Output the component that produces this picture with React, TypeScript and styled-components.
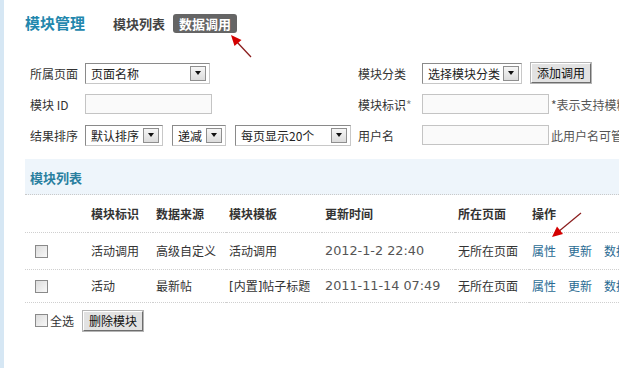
import React from 'react';
import styled, { createGlobalStyle } from 'styled-components';

const GlobalStyle = createGlobalStyle`
  html, body {
    margin: 0;
    padding: 0;
    background: #fff;
    overflow: hidden;
  }
  body {
    font-family: "DejaVu Sans", "Noto Sans CJK SC", sans-serif;
    font-size: 12px;
    color: #333;
  }
`;

const Page = styled.div`
  position: relative;
  width: 619px;
  height: 368px;
  box-sizing: border-box;
  border-left: 4px solid #d6e7f4;
  padding-left: 21px;
  overflow: hidden;
`;

const Header = styled.div`
  display: flex;
  align-items: center;
  padding-top: 13px;
  height: 20px;
`;

const Title = styled.h2`
  margin: 0 22px 0 0;
  font-size: 15px;
  line-height: 20px;
  font-weight: bold;
  color: #2287ad;
  font-family: "Noto Sans CJK SC", sans-serif;
`;

const Tab = styled.span<{ active?: boolean }>`
  display: inline-block;
  font-family: "Noto Sans CJK SC", sans-serif;
  font-size: 13px;
  font-weight: bold;
  line-height: 19px;
  height: 19px;
  padding: 0 6px;
  margin-right: 2px;
  border-radius: 3px;
  color: ${(p) => (p.active ? '#fff' : '#444')};
  background: ${(p) => (p.active ? '#656565' : 'transparent')};
`;

const Form = styled.div`
  display: grid;
  grid-template-columns: 55px 273px 64px 1fr;
  grid-auto-rows: 22px;
  row-gap: 9px;
  margin-top: 29px;
  padding-left: 5px;
  align-items: center;
`;

const Label = styled.span`
  font-family: "Noto Sans CJK SC", sans-serif;
  color: #333;
  white-space: nowrap;
`;

const Star = styled.span`
  color: #888;
`;

const Controls = styled.div`
  display: flex;
  align-items: center;
  gap: 9px;
  white-space: nowrap;
`;

const SelectBox = styled.div<{ w: number }>`
  display: flex;
  align-items: center;
  justify-content: space-between;
  box-sizing: border-box;
  width: ${(p) => p.w}px;
  height: 21px;
  padding: 0 3px 0 5px;
  border: 1px solid #8a8a8a;
  border-right-color: #c8c8c8;
  border-bottom-color: #c8c8c8;
  background: #fff;
  font-family: "Noto Sans CJK SC", sans-serif;
  color: #222;
  white-space: nowrap;
  overflow: hidden;
`;

const ArrowBox = styled.span`
  display: flex;
  align-items: center;
  justify-content: center;
  flex: none;
  width: 14px;
  height: 13px;
  margin-left: 3px;
  border: 1px solid #8f8f8f;
  background: linear-gradient(#f6f6f6, #dcdcdc);
  &::after {
    content: '';
    border-left: 3px solid transparent;
    border-right: 3px solid transparent;
    border-top: 4px solid #111;
  }
`;

const TextInput = styled.div`
  box-sizing: border-box;
  width: 127px;
  height: 20px;
  border: 1px solid #c4c4c4;
  background: #fafafa;
`;

const Note = styled.span`
  margin-left: -7px;
  color: #555;
  font-family: "Noto Sans CJK SC", sans-serif;
`;

const Button = styled.button`
  box-sizing: border-box;
  height: 20px;
  padding: 0 5px;
  font-family: "Noto Sans CJK SC", sans-serif;
  font-size: 12px;
  line-height: 16px;
  color: #111;
  background: #e2e2e2;
  border: 1px solid;
  border-color: #fff #6d6d6d #6d6d6d #fff;
  outline: 1px solid #b5b5b5;
`;

const Section = styled.div`
  margin-top: 13px;
`;

const SectionHead = styled.div`
  height: 34px;
  padding-left: 5px;
  background: #eef5fb;
  border-bottom: 1px dotted #c9c9c9;
  display: flex;
  align-items: center;
  font-family: "Noto Sans CJK SC", sans-serif;
  font-size: 13px;
  font-weight: bold;
  color: #2a7f9f;
  padding-top: 1px;
`;

const Table = styled.table`
  border-collapse: collapse;
  table-layout: fixed;
  width: 620px;
`;

const Row = styled.tr<{ h: number }>`
  height: ${(p) => p.h}px;
  border-bottom: 1px dotted #cfcfcf;
`;

const Th = styled.th<{ w?: number }>`
  box-sizing: border-box;
  width: ${(p) => (p.w ? `${p.w}px` : 'auto')};
  text-align: left;
  padding: 0 0 0 3px;
  font-family: "Noto Sans CJK SC", sans-serif;
  font-weight: bold;
  font-size: 12px;
  color: #333;
  white-space: nowrap;
`;

const Td = styled.td<{ muted?: boolean }>`
  box-sizing: border-box;
  padding: 0 0 0 3px;
  white-space: nowrap;
  overflow: hidden;
  color: ${(p) => (p.muted ? '#555' : '#333')};
  font-size: ${(p) => (p.muted ? '12.8px' : '12px')};
`;

const CheckCell = styled.td`
  box-sizing: border-box;
  padding-left: 10px;
`;

const Check = styled.span`
  display: inline-block;
  box-sizing: border-box;
  width: 13px;
  height: 13px;
  border: 1px solid #8a8a8a;
  background: linear-gradient(135deg, #dcdcdc, #f8f8f8);
  vertical-align: middle;
`;

const Link = styled.a`
  color: #2a6b93;
  text-decoration: none;
  margin-right: 12px;
`;

const Footer = styled.div`
  display: flex;
  align-items: center;
  gap: 9px;
  padding: 8px 0 0 10px;
  font-family: "Noto Sans CJK SC", sans-serif;
`;

const CheckLabel = styled.label`
  display: flex;
  align-items: center;
  gap: 2px;
  color: #333;
`;

const Overlay = styled.svg`
  position: absolute;
  left: 0;
  top: 0;
  pointer-events: none;
`;

type Module = {
  id: string;
  source: string;
  template: string;
  updated: string;
  page: string;
};

const modules: Module[] = [
  { id: '活动调用', source: '高级自定义', template: '活动调用', updated: '2012-1-2 22:40', page: '无所在页面' },
  { id: '活动', source: '最新帖', template: '[内置]帖子标题', updated: '2011-11-14 07:49', page: '无所在页面' },
];

const Select: React.FC<{ w: number; children: React.ReactNode }> = ({ w, children }) => (
  <SelectBox w={w}>
    <span>{children}</span>
    <ArrowBox />
  </SelectBox>
);

export default function App() {
  return (
    <>
      <GlobalStyle />
      <Page>
        <Header>
          <Title>模块管理</Title>
          <Tab>模块列表</Tab>
          <Tab active>数据调用</Tab>
        </Header>

        <Form>
          <Label>所属页面</Label>
          <Controls>
            <Select w={125}>页面名称</Select>
          </Controls>
          <Label>模块分类</Label>
          <Controls>
            <Select w={100}>选择模块分类</Select>
            <Button>添加调用</Button>
          </Controls>

          <Label>模块 ID</Label>
          <Controls>
            <TextInput />
          </Controls>
          <Label>
            模块标识<Star>*</Star>
          </Label>
          <Controls>
            <TextInput />
            <Note>*表示支持模糊查询</Note>
          </Controls>

          <Label>结果排序</Label>
          <Controls>
            <Select w={78}>默认排序</Select>
            <Select w={54}>递减</Select>
            <Select w={116}>每页显示20个</Select>
          </Controls>
          <Label>用户名</Label>
          <Controls>
            <TextInput />
            <Note>此用户名可管理</Note>
          </Controls>
        </Form>

        <Section>
          <SectionHead>模块列表</SectionHead>
          <Table>
            <thead>
              <Row h={37}>
                <Th w={63} />
                <Th w={65}>模块标识</Th>
                <Th w={73}>数据来源</Th>
                <Th w={96}>模块模板</Th>
                <Th w={133}>更新时间</Th>
                <Th w={74}>所在页面</Th>
                <Th>操作</Th>
              </Row>
            </thead>
            <tbody>
              {modules.map((m, i) => (
                <Row key={m.updated} h={i === 0 ? 37 : 33}>
                  <CheckCell>
                    <Check />
                  </CheckCell>
                  <Td>{m.id}</Td>
                  <Td>{m.source}</Td>
                  <Td>{m.template}</Td>
                  <Td muted>{m.updated}</Td>
                  <Td>{m.page}</Td>
                  <Td>
                    <Link>属性</Link>
                    <Link>更新</Link>
                    <Link>数据</Link>
                  </Td>
                </Row>
              ))}
            </tbody>
          </Table>
          <Footer>
            <CheckLabel>
              <Check />
              全选
            </CheckLabel>
            <Button>删除模块</Button>
          </Footer>
        </Section>

        <Overlay width="619" height="368" viewBox="0 0 619 368">
          <line x1="247" y1="57" x2="232" y2="41" stroke="#8a1c1c" strokeWidth="1.2" />
          <polygon points="227,35 237.5,40 230.5,46" fill="#d40000" />
          <line x1="577" y1="213" x2="554" y2="232" stroke="#8a1c1c" strokeWidth="1.2" />
          <polygon points="548,237 559,234 553,226.5" fill="#d40000" />
        </Overlay>
      </Page>
    </>
  );
}
